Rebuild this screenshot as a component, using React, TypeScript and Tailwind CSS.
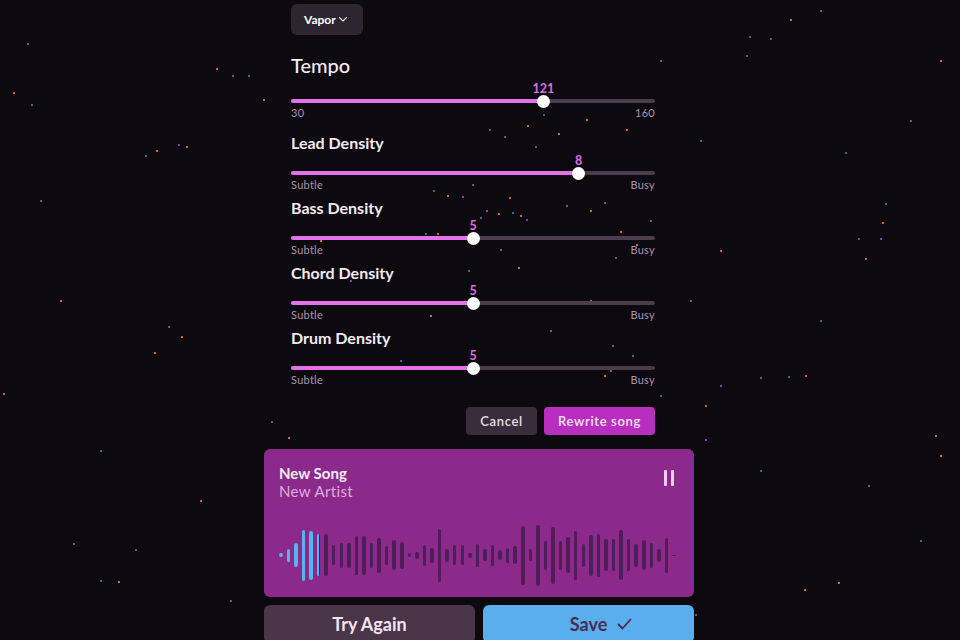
import React from "react";

type Star = [number, number, "o" | "p" | "b"];

const STARS: Star[] = [
  [27, 43, "p"], [13, 92, "o"], [31, 104, "b"], [216, 68, "o"], [232, 75, "p"], [248, 75, "b"],
  [263, 99, "o"], [178, 144, "p"], [156, 150, "o"], [186, 146, "o"], [145, 155, "b"], [168, 326, "p"],
  [154, 352, "o"], [181, 336, "o"], [3, 393, "o"], [73, 543, "p"], [100, 580, "b"], [118, 581, "o"],
  [135, 549, "p"], [288, 437, "o"], [271, 421, "p"], [749, 36, "p"], [770, 38, "p"], [746, 55, "b"],
  [790, 19, "o"], [845, 152, "b"], [885, 203, "b"], [882, 222, "o"], [858, 238, "p"], [880, 238, "p"],
  [865, 258, "o"], [805, 375, "o"], [760, 377, "p"], [788, 376, "b"], [935, 435, "o"], [940, 455, "o"],
  [868, 485, "p"], [804, 589, "o"], [838, 582, "o"], [705, 405, "o"], [705, 439, "p"], [695, 614, "p"],
  [720, 385, "p"], [612, 345, "p"], [632, 355, "b"], [604, 375, "o"], [610, 370, "p"], [543, 114, "b"],
  [504, 136, "p"], [527, 125, "o"], [489, 129, "p"], [535, 146, "p"], [558, 133, "o"], [586, 119, "o"],
  [626, 129, "o"], [433, 190, "b"], [447, 195, "o"], [462, 196, "p"], [472, 184, "p"], [498, 213, "o"],
  [512, 212, "b"], [520, 215, "o"], [486, 210, "p"], [509, 197, "o"], [526, 219, "p"], [566, 205, "p"],
  [590, 210, "o"], [604, 202, "p"], [480, 217, "b"], [425, 233, "b"], [437, 233, "o"], [500, 249, "p"],
  [518, 267, "o"], [468, 270, "b"], [620, 231, "o"], [615, 257, "p"], [636, 244, "o"], [650, 220, "p"],
  [590, 300, "o"], [550, 330, "p"], [430, 315, "o"], [400, 360, "b"], [350, 280, "p"], [320, 240, "o"],
  [660, 60, "p"], [700, 140, "b"], [720, 250, "o"], [690, 300, "p"], [760, 470, "b"], [940, 60, "o"],
  [910, 120, "p"], [820, 320, "b"], [60, 300, "o"], [40, 200, "p"], [100, 450, "b"], [200, 500, "o"],
  [230, 600, "p"], [820, 10, "p"], [920, 540, "b"], [660, 395, "b"], [640, 420, "o"],
];

const STAR_COLOR: Record<Star[2], string> = {
  o: "#d2661e",
  p: "#8c3ea0",
  b: "#2d6a9a",
};

const WAVE = [
  4, 13, 24, 51, 49, 42, 42, 20, 25, 25, 39, 39, 25, 35, 19, 30, 27, 4, 7, 21, 15, 53, 13, 20, 20, 5,
  23, 12, 21, 10, 15, 18, 59, 12, 61, 29, 57, 29, 36, 49, 23, 41, 43, 32, 32, 50, 32, 23, 30, 25, 13,
  35, 1,
];
const PLAYED = 5;

function Slider({
  title,
  value,
  min,
  max,
  left,
  right,
  big,
}: {
  title: string;
  value: number;
  min: number;
  max: number;
  left: string;
  right: string;
  big?: boolean;
}) {
  const pct = (value - min) / (max - min);
  const thumbX = 6 + pct * (364 - 12);
  return (
    <div className="flex flex-col">
      {big ? (
        <div className="text-[20px] leading-[28px] font-medium text-[#f3eaf3]">{title}</div>
      ) : (
        <div className="text-[16px] leading-[20px] font-bold text-[#f3eaf3]">{title}</div>
      )}
      <div className={big ? "relative h-[12px] mt-[16px]" : "relative h-[12px] mt-[14px]"}>
        <div className="absolute left-0 right-0 top-[4px] h-[4px] rounded-full bg-[#4b3c4e]" />
        <div
          className="absolute left-0 top-[4px] h-[4px] rounded-full bg-[#e271ea]"
          style={{ width: thumbX }}
        />
        <div
          className="absolute top-[-0.5px] w-[13px] h-[13px] -ml-[6.5px] rounded-full bg-white"
          style={{ left: thumbX }}
        />
        <div
          className="absolute bottom-[11px] -translate-x-1/2 text-[12.5px] leading-[14px] font-bold text-[#d96fe3]"
          style={{ left: thumbX }}
        >
          {value}
        </div>
      </div>
      <div className="flex justify-between text-[11px] leading-[12px] tracking-wide text-[#ad92ae]">
        <span>{left}</span>
        <span>{right}</span>
      </div>
    </div>
  );
}

export default function App() {
  return (
    <div
      className="relative h-[640px] w-[960px] overflow-hidden bg-[#0d0a0f]"
      style={{ fontFamily: "Lato, 'Noto Sans', sans-serif" }}
    >
      {/* starfield */}
      <div className="absolute inset-0">
        {STARS.map(([x, y, c], i) => (
          <div
            key={i}
            className="absolute w-[2px] h-[2px]"
            style={{ left: x, top: y, backgroundColor: STAR_COLOR[c] }}
          />
        ))}
      </div>

      <div className="relative ml-[264px] w-[430px] flex flex-col">
        <div className="ml-[27px] w-[364px] flex flex-col">
          <div className="mt-[4px] w-[72px] h-[31px] rounded-md bg-[#2d2530] flex items-center pl-[13px] gap-[2px]">
            <span className="text-[12px] font-bold text-white">Vapor</span>
            <svg width="10" height="7" viewBox="0 0 10 7" fill="none">
              <path d="M1.5 1.5 L5 5 L8.5 1.5" stroke="#f0d8f0" strokeWidth="1.1" strokeLinecap="round" strokeLinejoin="round" />
            </svg>
          </div>

          <div className="mt-[16px]">
            <Slider title="Tempo" value={121} min={30} max={160} left="30" right="160" big />
          </div>
          <div className="mt-[14px] flex flex-col gap-[7px]">
            <Slider title="Lead Density" value={8} min={0} max={10} left="Subtle" right="Busy" />
            <Slider title="Bass Density" value={5} min={0} max={10} left="Subtle" right="Busy" />
            <Slider title="Chord Density" value={5} min={0} max={10} left="Subtle" right="Busy" />
            <Slider title="Drum Density" value={5} min={0} max={10} left="Subtle" right="Busy" />
          </div>

          <div className="mt-[21px] flex justify-end gap-[7px]">
            <button className="w-[71px] h-[28px] pt-[2px] rounded-[4px] bg-[#3a2d3b] text-[13px] font-semibold tracking-wider text-[#eadcea]">
              Cancel
            </button>
            <button className="w-[111px] h-[28px] pt-[2px] rounded-[4px] bg-[#b82fc0] text-[13px] font-semibold tracking-wider text-[#f6e6f6]">
              Rewrite song
            </button>
          </div>
        </div>

        {/* now playing card */}
        <div className="mt-[14px] h-[148px] rounded-md bg-[#8b2a8a] pt-[15px] pl-[15px] pr-[20px] flex flex-col">
          <div className="flex justify-between items-start">
            <div className="flex flex-col">
              <span className="text-[15px] leading-[18px] font-bold text-[#f7eaf7]">New Song</span>
              <span className="text-[15px] leading-[19px] font-normal tracking-wide text-[#deaede]">New Artist</span>
            </div>
            <div className="mt-[6px] flex gap-[4px]">
              <div className="w-[3px] h-[16px] rounded-[1px] bg-[#f2cdf2]" />
              <div className="w-[3px] h-[16px] rounded-[1px] bg-[#f2cdf2]" />
            </div>
          </div>
          <div className="mt-[22px] w-[397px] h-[64px] flex items-center justify-between">
            {WAVE.map((h, i) => {
              let cls = "w-[3.5px] rounded-full bg-[#4f1d58]";
              if (i < PLAYED) cls = "w-[3.5px] rounded-full bg-[#57b4f0]";
              if (i === PLAYED) cls = "w-[3.5px] rounded-full bg-[linear-gradient(to_right,#57b4f0_55%,#4f1d58_55%)]";
              return <div key={i} className={cls} style={{ height: Math.max(h, 1) }} />;
            })}
          </div>
        </div>

        <div className="mt-[8px] flex gap-[8px]">
          <button className="flex-1 h-[38px] rounded-md bg-[#4a3549] text-[18px] font-bold text-[#f3e4f3] flex items-center justify-center">
            Try Again
          </button>
          <button className="flex-1 h-[38px] rounded-md bg-[#5aaeee] text-[18px] font-bold text-[#4b2a50] flex items-center justify-center">
            <span className="relative">
              Save
              <svg
                className="absolute left-full top-1/2 -translate-y-1/2 ml-[10px]"
                width="15"
                height="12"
                viewBox="0 0 15 12"
                fill="none"
              >
                <path d="M1.5 6.5 L5.5 10.5 L13.5 1.5" stroke="#4b2a50" strokeWidth="1.8" strokeLinecap="round" strokeLinejoin="round" />
              </svg>
            </span>
          </button>
        </div>
      </div>
    </div>
  );
}
